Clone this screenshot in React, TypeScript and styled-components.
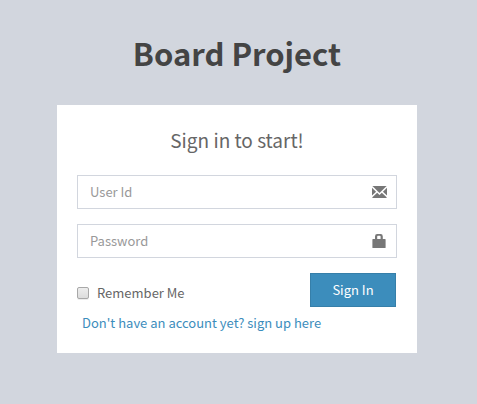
import React from "react";
import styled, { createGlobalStyle } from "styled-components";

const GlobalStyle = createGlobalStyle`
  *, *::before, *::after { box-sizing: border-box; }
  body {
    margin: 0;
    background: #d2d6de;
    color: #444;
    font-family: "Source Sans Pro", "Noto Sans CJK JP", "Noto Sans", sans-serif;
    font-size: 13px;
    line-height: 20px;
  }
`;

const Page = styled.main`
  display: flex;
  flex-direction: column;
  align-items: center;
  min-height: 100vh;
  padding: 28px 3px 28px 0;
`;

const Logo = styled.h1`
  margin: 0 0 27px;
  font-size: 31px;
  font-weight: 700;
  line-height: 50px;
`;

const Card = styled.form`
  width: 100%;
  max-width: 360px;
  padding: 20px;
  background: #fff;
  color: #666;
`;

const Message = styled.h2`
  margin: 0 0 20px;
  font-size: 19px;
  font-weight: 400;
  line-height: 30px;
  text-align: center;
`;

const Field = styled.label`
  display: flex;
  align-items: center;
  height: 34px;
  margin-bottom: 15px;
  padding: 0 9px 0 12px;
  border: 1px solid #d2d6de;
  color: #777;

  &:focus-within { border-color: #3c8dbc; }
`;

const TextInput = styled.input`
  flex: 1;
  min-width: 0;
  height: 32px;
  padding: 0 0 2px;
  border: 0;
  outline: 0;
  background: transparent;
  color: #555;
  font: inherit;

  &::placeholder { color: #999; opacity: 1; }
`;

const Icon = styled.svg`
  flex: none;
  display: block;
  fill: currentColor;
`;

const Actions = styled.div`
  display: flex;
  align-items: center;
  justify-content: space-between;
  padding-right: 1px;
`;

const Remember = styled.label`
  display: flex;
  align-items: center;
  gap: 8px;
  padding-top: 6px;
  cursor: pointer;
`;

const Checkbox = styled.input`
  appearance: none;
  width: 12px;
  height: 12px;
  margin: 0;
  border: 1px solid #a8a8a8;
  border-radius: 2px;
  background: linear-gradient(#ededed, #dcdcdc);
  box-shadow: 0 1px 0 #ececec;

  &:checked { background: #3c8dbc; }
`;

const SubmitButton = styled.button`
  width: 86px;
  height: 34px;
  padding: 0;
  border: 1px solid #367fa9;
  background: #3c8dbc;
  color: #fff;
  font: inherit;
  cursor: pointer;

  &:hover { background: #367fa9; }
`;

const SignUpLink = styled.a`
  display: block;
  width: fit-content;
  margin: 6px 0 0 5px;
  color: #3c8dbc;
  text-decoration: none;
`;

function EnvelopeIcon() {
  return (
    <Icon width="15" height="12" viewBox="0 0 15 12" aria-hidden="true">
      <path d="M0.4 0H14.6L7.5 7Z" />
      <path d="M0 1.8L4.1 5.8L0 9.4Z" />
      <path d="M15 1.8L10.9 5.8L15 9.4Z" />
      <path d="M5.2 6.8L7.5 9L9.8 6.8L14.6 11.2V12H0.4V11.2Z" />
    </Icon>
  );
}

function LockIcon() {
  return (
    <Icon width="15" height="14" viewBox="0 0 15 14" aria-hidden="true">
      <path
        fillRule="evenodd"
        d="M1 5H3V2.4Q3 0 5.2 0H8.6Q10.8 0 10.8 2.4V5H13Q13.6 5 13.6 5.6V13.4Q13.6 14 13 14H1Q0.4 14 0.4 13.4V5.6Q0.4 5 1 5ZM5.2 5H8.6V2.6Q8.6 1.8 7.8 1.8H6Q5.2 1.8 5.2 2.6Z"
      />
    </Icon>
  );
}

export default function App() {
  return (
    <>
      <GlobalStyle />
      <Page>
        <Logo>Board Project</Logo>
        <Card onSubmit={(event: React.FormEvent) => event.preventDefault()}>
          <Message>Sign in to start!</Message>
          <Field>
            <TextInput type="text" placeholder="User Id" aria-label="User Id" />
            <EnvelopeIcon />
          </Field>
          <Field>
            <TextInput type="password" placeholder="Password" aria-label="Password" />
            <LockIcon />
          </Field>
          <Actions>
            <Remember>
              <Checkbox type="checkbox" />
              Remember Me
            </Remember>
            <SubmitButton type="submit">Sign In</SubmitButton>
          </Actions>
          <SignUpLink href="#signup">Don't have an account yet? sign up here</SignUpLink>
        </Card>
      </Page>
    </>
  );
}
